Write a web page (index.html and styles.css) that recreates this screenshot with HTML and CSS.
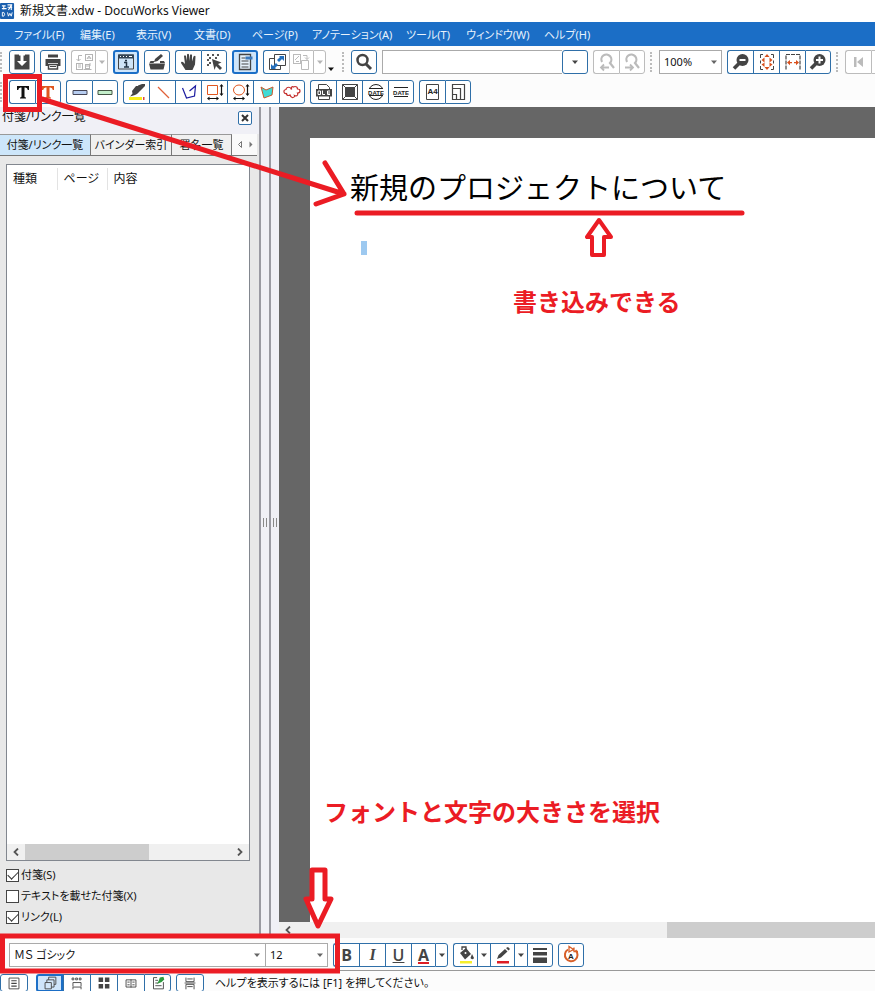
FILE: index.html
```html
<!DOCTYPE html>
<html lang="ja">
<head>
<meta charset="utf-8">
<title>新規文書.xdw - DocuWorks Viewer</title>
<link rel="stylesheet" href="styles.css">
</head>
<body>
<svg class="defs" aria-hidden="true">
  <symbol id="caret" viewBox="0 0 8 8"><path d="M1 2.500h6L4 6z" fill="currentColor"/></symbol>
  <symbol id="chev-left" viewBox="0 0 8 8"><path d="M6 .5 2.500 4 6 7.500" fill="none" stroke="currentColor" stroke-width="1.800"/></symbol>
  <symbol id="chev-right" viewBox="0 0 8 8"><path d="M2 .5 5.500 4 2 7.500" fill="none" stroke="currentColor" stroke-width="1.800"/></symbol>
</svg>

<header class="titlebar">
  <svg class="logo" viewBox="0 0 16 18"><rect width="15" height="17" x="0" y=".5" rx="1" fill="#1a5fae"/><path d="M2 3.500h4M4 3.500v4M2 6.500h5M8 2.500h5M8 5h5M9 8l3-5M12 3v5" stroke="#fff" stroke-width="1.200" fill="none"/><path d="M2.500 10.500v4h1.500q2-2 0-4zM8 10.500l1 4 1.500-3 1.500 3 1-4" stroke="#fff" fill="none"/></svg>
  <h1 class="window-title">新規文書.xdw - DocuWorks Viewer</h1>
</header>

<nav class="menubar">
  <a href="#">ファイル(F)</a><a href="#">編集(E)</a><a href="#">表示(V)</a><a href="#">文書(D)</a><a href="#">ページ(P)</a><a href="#">アノテーション(A)</a><a href="#">ツール(T)</a><a href="#">ウィンドウ(W)</a><a href="#">ヘルプ(H)</a>
</nav>

<div class="toolbars">
  <div class="toolbar">
    <span class="grip"></span>
    <div class="group"><button aria-label="保存"><svg viewBox="0 0 20 20"><path d="M2.500 2.500h15v15h-15z" fill="#444"/><path d="M8.500 2h3v7H15l-5 5-5-5h3.500z" fill="#fff"/><path d="M7 2h6v1.500H7z" fill="#fff"/></svg></button></div>
    <div class="group"><button aria-label="印刷"><svg viewBox="0 0 20 20"><path d="M5 2.500h10v3H5z" fill="#444"/><path d="M2.500 7h15v7H15v-3H5v3H2.500z" fill="#444"/><path d="M5.500 12.500h9v4.500h-9z" fill="#fff" stroke="#444" stroke-width="1.500"/><path d="M7 14h6v1H7z" fill="#444"/></svg></button></div>
    <div class="group off"><button class="mid" disabled aria-label="変換"><svg viewBox="0 0 20 20" fill="none" stroke="#b5b5b5"><rect x="11.500" y="2.500" width="7" height="6"/><path d="m13 7 2-3 2 3M13.500 6h3"/><rect x="2.500" y="11.500" width="6" height="6"/><path d="M4 13h3M4 15h3M8 3.500H4.500V9M2.500 7l2 2 2-2M11 14h5v-3M9.500 17.500h8"/><rect x="11.500" y="12.500" width="4" height="4"/></svg></button><button class="slim" disabled aria-label="変換メニュー"><svg class="arrow"><use href="#caret"/></svg></button></div>
    <div class="group"><button class="on" aria-label="情報"><svg viewBox="0 0 20 20"><path d="M2.500 3h15v14h-15z" fill="#cfe4f7" stroke="#444"/><path d="M2 2.500h16v4H2z" fill="#345"/><path d="M4 4.500h1M7 4.500h1M10 4.500h1M13 4.500h3" stroke="#fff"/><path d="M9 8.500h2M8 10.500h2.500v4.500M8 15h5" stroke="#234" stroke-width="1.500" fill="none"/></svg></button></div>
    <div class="group"><button aria-label="編集"><svg viewBox="0 0 20 20"><path d="M2 11.500h16l-1.500 6h-13zM3.500 9h4l-1 2H2.500zM13 9h4l1 2h-5z" fill="#444"/><path d="m7 10 1-3 6-5 2 2-5.500 5z" fill="#444"/></svg></button></div>
    <div class="group"><button aria-label="手のひら"><svg viewBox="0 0 20 20"><path d="M6.500 18 2 11q0-2 2-1l2 2-1-8q1-1.500 2 0l1 5V2.500q1-1.500 2 0V9l1-6q1-1.500 2 0v6.500l1.500-5q1.500-1.500 2 0l-.5 8-2.500 5.500z" fill="#444"/></svg></button><button aria-label="選択"><svg viewBox="0 0 20 20"><path d="m8 7 9.500 3.500-3.500 1.500 4 4-2 2-4-4-1.500 4z" fill="#444"/><path d="M3 2h2v2H3zM8 2h2v2H8zM13 2h2v2h-2zM3 7h2v2H3zM3 12h2v2H3zM5 5h2v2H5zM11 5h2v2h-2zM5 10h2v2H5z" fill="#555"/></svg></button></div>
    <div class="group"><button class="on" aria-label="ページ表示"><svg viewBox="0 0 20 20"><path d="M4.500 2.500h11v15h-11z" fill="#e6f2fc" stroke="#444" stroke-width="1.300"/><path d="M6.500 6h4M6.500 9h7M6.500 12h7M6.500 15h7" stroke="#444"/><path d="M10.500 4.500h7v3h-7z" fill="#3b79bd"/></svg></button></div>
    <div class="group"><button aria-label="連携"><svg viewBox="0 0 20 20" fill="none" stroke="#444"><path d="M7.500 2.500h11v11h-11zM7 6.500H2.500v11h11V14"/><path d="M12 4h5v5l-2-2-3 3-2-2 3-3zM9 17H4v-5l2 2 3-3 2 2-3 3z" fill="#2470bd" stroke="none"/></svg></button><button class="off mid" disabled aria-label="コピー"><svg viewBox="0 0 20 20" fill="none" stroke="#bbb"><rect x="1.500" y="2.500" width="7" height="9"/><path d="m3 8 4-4M4 9.500h3M11 3.500h4v4M13 5.500l2 2 2-2"/><path d="M9.500 8.500h7v9h-7z"/></svg></button><button class="off slim" disabled aria-label="コピーメニュー"><svg class="arrow"><use href="#caret"/></svg></button></div>
    <button class="overflow" aria-label="その他"><svg class="arrow"><use href="#caret"/></svg></button>
    <span class="grip"></span>
    <div class="group"><button aria-label="検索"><svg viewBox="0 0 20 20"><circle cx="8.500" cy="8" r="5" fill="none" stroke="#444" stroke-width="2.500"/><path d="m12 12 5 5" stroke="#444" stroke-width="3"/></svg></button></div>
    <div class="search"><input type="text" aria-label="検索文字列"><div class="group"><button aria-label="検索履歴"><svg class="arrow"><use href="#caret"/></svg></button></div></div>
    <div class="group off"><button disabled aria-label="前を検索"><svg viewBox="0 0 20 20" fill="none" stroke="#bbb"><path d="M5 10A5 5 0 1 1 13 11l4 5" stroke-width="2.200"/><path d="M12 15.500H4m3-3-3 3 3 3" stroke-width="1.800"/></svg></button><button disabled aria-label="次を検索"><svg viewBox="0 0 20 20" fill="none" stroke="#bbb"><path d="M5 10A5 5 0 1 1 13 11l4 5" stroke-width="2.200"/><path d="M3 15.500h8m-3-3 3 3-3 3" stroke-width="1.800"/></svg></button></div>
    <span class="grip"></span>
    <div class="combo zoom"><select aria-label="倍率"><option>100%</option></select><svg class="arrow"><use href="#caret"/></svg></div>
    <div class="group"><button aria-label="縮小"><svg viewBox="0 0 20 20"><circle cx="11.500" cy="8" r="6" fill="#444"/><path d="m8 11.500-5 5" stroke="#444" stroke-width="3.500"/><path d="M8.500 8h6" stroke="#fff" stroke-width="2"/></svg></button><button aria-label="全体表示"><svg viewBox="0 0 20 20"><path d="M6 2.500H3.500V6M14 2.500h2.500V6M6 17.500H3.500V14M14 17.500h2.500V14M3.500 8.500v3M16.500 8.500v3" fill="none" stroke="#444"/><path d="m10 2-2.500 3h5zM10 18l-2.500-3h5zM4.500 8l3-2.500v5zM15.500 8l-3-2.500v5zM4.500 12.500l3-2v4.500zM15.500 12.500l-3-2v4.500z" fill="#d8501c"/></svg></button><button aria-label="幅を合わせる"><svg viewBox="0 0 20 20"><path d="M3 17.500v-15h14v15" fill="none" stroke="#444" stroke-width="1.200" stroke-dasharray="4 1"/><path d="m4 10.500 3-2.500v2h2v1.200H7v2zM16 10.500l-3-2.500v2h-2v1.200h2v2z" fill="#d8501c"/></svg></button><button aria-label="拡大"><svg viewBox="0 0 20 20"><circle cx="11.500" cy="8" r="6" fill="#444"/><path d="m8 11.500-5 5" stroke="#444" stroke-width="3.500"/><path d="M8 8h7M11.500 4.500v7" stroke="#fff" stroke-width="2"/></svg></button></div>
    <span class="grip"></span>
    <div class="group off"><button disabled aria-label="先頭ページ"><svg viewBox="0 0 20 20"><path d="M5 5h2.500v10H5zM14 5v10l-6-5z" fill="#bbb"/></svg></button><button disabled aria-label="前ページ"><svg viewBox="0 0 20 20"><path d="M14 5v10l-6-5z" fill="#bbb"/></svg></button></div>
  </div>

  <div class="toolbar">
    <span class="grip"></span>
    <div class="group"><button aria-label="テキスト"><svg viewBox="0 0 20 20"><path d="M4 4h12v4h-1.200q-.3-2.500-2.500-2.500h-.8v9q0 1 1.500 1v1H7v-1q1.500 0 1.500-1v-9h-.8q-2.200 0-2.500 2.500H4z" fill="#111"/></svg></button><button aria-label="テキスト(赤)"><svg viewBox="0 0 20 20"><path d="M4 4h12v4h-1.200q-.3-2.500-2.500-2.500h-.8v9q0 1 1.500 1v1H7v-1q1.500 0 1.500-1v-9h-.8q-2.200 0-2.500 2.500H4z" fill="#e0561f"/></svg></button></div>
    <div class="group"><button aria-label="付箋(青)"><svg viewBox="0 0 20 20"><path d="M3 8.500h14v4H3z" fill="#b7cdf0" stroke="#445"/></svg></button><button aria-label="付箋(緑)"><svg viewBox="0 0 20 20"><path d="M3 8.500h14v4H3z" fill="#c4efcb" stroke="#454"/></svg></button></div>
    <div class="group"><button aria-label="マーカー"><svg viewBox="0 0 20 20"><path d="M2 15h13v3H2z" fill="#f8ee1c"/><path d="M16 15h1.500v3H16z" fill="#e3463a"/><path d="m5 9 4-5h9l-5 5-3 3-2 1-5 1.500 2.500-3zM11 3.500l4-1.500h3v2l-2 2h-5z" fill="#444"/></svg></button><button aria-label="直線"><svg viewBox="0 0 20 20"><path d="m5 5 11 11" stroke="#e06038" stroke-width="1.300"/></svg></button><button aria-label="折れ線"><svg viewBox="0 0 20 20"><path d="m3.500 6 4 10 8-2 1-10-6 5" fill="none" stroke="#1b1ba0" stroke-width="1.200"/></svg></button><button aria-label="矩形"><svg viewBox="0 0 20 20"><path d="M2.500 3.500h10v9h-10z" fill="none" stroke="#e0561f"/><path d="M3 16.500h10M16.500 3.500v9" stroke="#111" stroke-width="1.200"/><path d="m2 16.500 2.500-2v4zM14 16.500l-2.500-2v4zM16.500 2l-2 2.500h4zM16.500 14l-2-2.500h4z" fill="#111"/></svg></button><button aria-label="楕円"><svg viewBox="0 0 20 20"><ellipse cx="8" cy="8" rx="5.500" ry="5" fill="none" stroke="#e0561f"/><path d="M3 16.500h10M16.500 3.500v9" stroke="#111" stroke-width="1.200"/><path d="m2 16.500 2.500-2v4zM14 16.500l-2.500-2v4zM16.500 2l-2 2.500h4zM16.500 14l-2-2.500h4z" fill="#111"/></svg></button><button aria-label="多角形"><svg viewBox="0 0 20 20"><path d="m4 5 5 3 7-3-1 8-8 3z" fill="#3edbd6" stroke="#c85b2e"/></svg></button><button aria-label="雲形"><svg viewBox="0 0 20 20"><path d="M9.500 7.500q-1-3-4-2-1.500.5-1.500 2-2.500.5-2 2.500.5 2 2.500 1.500 0 2 2 2 1 0 1.500-.5 1 3 3 2.500 2-.5 1.500-2 2 1 3-.5.500-1 0-2 2.500 0 2.500-2t-2.500-2q0-2.500-2.500-2.500-1 0-1.500.5-1.500-1-2 .5z" fill="#fff" stroke="#c4302f" stroke-width="1.200"/></svg></button></div>
    <div class="group"><button aria-label="OLE"><svg viewBox="0 0 20 20"><path d="M4.500 7V2.500h8l3 3V7M4.500 14v3.500h11V14" fill="none" stroke="#444"/><path d="M2 7h16v7.500H2z" fill="#444"/><path d="M4 9h2.500v3.500H4zM8.500 8.500v4H11M16 9h-2.500v3.500H16M13.500 11H16" fill="none" stroke="#fff"/></svg></button><button aria-label="イメージ"><svg viewBox="0 0 20 20"><path d="M2.500 2.500h15v15h-15zM2.500 2.500l3 3M17.500 2.500l-3 3M2.500 17.500l3-3M17.500 17.500l-3-3" fill="none" stroke="#444"/><path d="M5 5h10v10H5z" fill="#444"/></svg></button><button class="stamp" aria-label="日付印"><svg viewBox="0 0 20 20"><circle cx="10" cy="10" r="7.500" fill="none" stroke="#222"/><path d="M1 6.500h18v7H1z" fill="#fff"/><path d="M3 6.500h14M3 13.500h14" stroke="#222"/><text x="10" y="12.500" text-anchor="middle">DATE</text></svg></button><button class="stamp" aria-label="日付"><svg viewBox="0 0 20 20"><path d="M3 5.500h14M3 14.500h14" stroke="#222"/><text x="10" y="12.500" text-anchor="middle">DATE</text></svg></button></div>
    <div class="group"><button class="stamp" aria-label="A4"><svg viewBox="0 0 20 20"><path d="M3.500 2.500h12v15h-12z" fill="none" stroke="#444"/><text class="a4" x="9.500" y="12" text-anchor="middle">A4</text></svg></button><button aria-label="用紙サイズ"><svg viewBox="0 0 20 20"><path d="M4.500 2.500h12v15h-12zM4.500 6.500h8v11M4.500 12.500h4v5" fill="none" stroke="#444" stroke-width="1.200"/></svg></button></div>
  </div>
</div>

<main class="workspace">
  <aside class="sidebar">
    <div class="panel-head"><h2>付箋/リンク一覧</h2><button class="close" aria-label="閉じる"><svg viewBox="0 0 12 12"><path d="m3 3 6 6M9 3 3 9" stroke="#333" stroke-width="2"/></svg></button></div>
    <div class="tabs"><button class="tab current">付箋/リンク一覧</button><button class="tab">バインダー索引</button><button class="tab">署名一覧</button><span class="tab-scroll"><svg viewBox="0 0 20 10"><path d="M6.500 1.500v6l-3-3z" fill="none" stroke="#777"/><path d="M14.500 1.500v6l3-3z" fill="#777"/></svg></span></div>
    <div class="list">
      <table><thead><tr><th>種類</th><th>ページ</th><th>内容</th></tr></thead></table>
      <div class="hscroll"><svg class="chev"><use href="#chev-left"/></svg><div class="track"><div class="thumb"></div></div><svg class="chev"><use href="#chev-right"/></svg></div>
    </div>
    <div class="filters">
      <label><input type="checkbox" checked>付箋(S)</label>
      <label><input type="checkbox">テキストを載せた付箋(X)</label>
      <label><input type="checkbox" checked>リンク(L)</label>
    </div>
  </aside>
  <div class="splitter"><i></i></div>
  <div class="splitter"><i></i></div>
  <section class="viewer">
    <div class="canvas">
      <article class="page">
        <h2 class="doc-title">新規のプロジェクトについて</h2>
        <div class="selection"></div>
      </article>
    </div>
    <div class="hscroll"><svg class="chev"><use href="#chev-left"/></svg><div class="track"><div class="thumb"></div></div></div>
  </section>
</main>

<div class="formatbar">
  <div class="combo font"><select aria-label="フォント"><option>ＭＳ ゴシック</option></select><svg class="arrow"><use href="#caret"/></svg></div>
  <div class="combo size"><select aria-label="サイズ"><option>12</option></select><svg class="arrow"><use href="#caret"/></svg></div>
  <div class="group">
    <button class="letter bold">B</button><button class="letter italic">I</button><button class="letter under">U</button><button class="letter color mid">A</button><button class="slim" aria-label="文字色"><svg class="arrow"><use href="#caret"/></svg></button>
  </div>
  <div class="group">
    <button class="mid" aria-label="塗りつぶし"><svg viewBox="0 0 20 20"><path d="M4 16h12v2.500H4z" fill="#f5ee2b"/><path d="m4 8 6-5 5 6-6 5.500z" fill="#444"/><path d="M6 5V2h4v3" fill="none" stroke="#444" stroke-width="1.300"/><path d="m16 9 2 4q-1.500 2.500-3.500 0z" fill="#444"/><circle cx="9.500" cy="8" r="1" fill="#fff"/></svg></button><button class="slim" aria-label="塗りつぶし色"><svg class="arrow"><use href="#caret"/></svg></button><button class="mid" aria-label="線の色"><svg viewBox="0 0 20 20"><path d="M4 16h12v2.500H4z" fill="#dd1c24"/><path d="m4 14 1.500-4L12 4l2.500 2.500-6.500 6zM13 3l2-1 2 2-1.500 1.500z" fill="#444"/></svg></button><button class="slim" aria-label="線の色メニュー"><svg class="arrow"><use href="#caret"/></svg></button><button aria-label="線の太さ"><svg viewBox="0 0 20 20"><path d="M3 3h14v2H3zM3 7h14v3.500H3zM3 12.500h14V18H3z" fill="#444"/></svg></button>
  </div>
  <div class="group"><button class="stamp" aria-label="回転"><svg viewBox="0 0 20 20"><path d="M7 4.500a6.300 6.300 0 1 0 7.500.8" fill="none" stroke="#d8602a" stroke-width="2"/><path d="M8 1.500v5.500l4.500-2.500zM13 2.500v4h4" fill="none" stroke="#d8602a" stroke-width="1.300"/><text class="a4" x="10" y="13.500" text-anchor="middle">A</text></svg></button></div>
</div>

<footer class="statusbar">
  <div class="group"><button aria-label="ページ"><svg viewBox="0 0 20 20"><path d="M4.500 4.500h11v12h-11z" fill="none" stroke="#444"/><path d="M7 7.500h6M7 10.500h6M7 13.500h6" stroke="#444" stroke-width="1.300"/></svg></button></div>
  <div class="group"><button class="on" aria-label="重ねて表示"><svg viewBox="0 0 20 20" fill="#d3e7fa" stroke="#444"><path d="M8.500 3.500h8v8h-8z"/><path d="M6.500 6.500h8v8h-8z"/><path d="M4.500 9.500h7v7h-7z"/></svg></button><button aria-label="連続表示"><svg viewBox="0 0 20 20" fill="none" stroke="#444"><path d="M4.500 4.500h2v2h-2zM8.500 4.500h2v2h-2zM12.500 4.500h2v2h-2zM5.500 14V9.500h9V14M5.500 17v-2.500h9V17"/></svg></button><button aria-label="一覧"><svg viewBox="0 0 20 20" fill="#444"><path d="M4 4h5v5H4zM11 4h5v5h-5zM4 11h5v5H4zM11 11h5v5h-5z"/></svg></button><button aria-label="見開き"><svg viewBox="0 0 20 20" fill="none" stroke="#444"><path d="M4.500 6.500h11v8h-11zM10 6v9M6 9h2.500M6 12h2.500M11.500 9H14M11.500 12H14"/></svg></button><button aria-label="状態"><svg viewBox="0 0 20 20" fill="none" stroke="#444"><path d="M9 4H5v12.500h11V9M7 7h3M7 10h3M7 13h7"/><path d="m9 11 2-4 1-3 4-1 1 3-3 3z" fill="#2e9a3e" stroke="none"/></svg></button></div>
  <div class="group"><button aria-label="縦並び"><svg viewBox="0 0 20 20" fill="none" stroke="#444"><path d="M5.500 4v4.500h9V4M5.500 17v-5.500h9V17M7 5.500h6M7 14h6M4 10h12"/></svg></button></div>
  <p class="hint">ヘルプを表示するには [F1] を押してください。</p>
</footer>

<div class="notes">
  <svg class="marks" width="875" height="991" viewBox="0 0 875 991" fill="none" stroke="#eb1c24" stroke-width="5" stroke-linecap="round" stroke-linejoin="round">
    <path d="M5.500 76.500h34v33h-34z" stroke-linejoin="miter"/>
    <path d="M2.500 936h335v35h-335z" stroke-linejoin="miter"/>
    <path d="M42 99 344 194M325 163l19 31-28 10"/>
    <path d="M357 213h385"/>
    <path d="M599 220l-12 17h5v18h12v-18h7z" stroke-width="4"/>
    <path d="M312 870h13v29h6l-13 27-12-27h6z" fill="#fff"/>
  </svg>
  <p class="note note-write">書き込みできる</p>
  <p class="note note-font">フォントと文字の大きさを選択</p>
</div>
</body>
</html>
```
FILE: styles.css
```css
* { box-sizing: border-box; }

body {
  position: relative;
  display: flex;
  flex-direction: column;
  min-height: 100vh;
  margin: 0;
  overflow: hidden;
  background: #fcfcfc;
  color: #111;
  font: 11px/16px "Noto Sans", "Noto Sans CJK JP", sans-serif;
  font-feature-settings: "palt";
}

h1, h2, p { margin: 0; font-weight: 400; }
button, input, select { font: inherit; font-feature-settings: inherit; color: inherit; }
svg { display: block; flex: none; }
.defs { position: absolute; width: 0; height: 0; }

.titlebar {
  display: flex;
  align-items: center;
  gap: 5px;
  height: 22px;
  background: #fff;
}
.logo { width: 15px; height: 18px; }
.window-title { font-size: 12px; line-height: 20px; }

.menubar {
  display: grid;
  grid-template-columns: 66px 56px 58px 58px 60px 94px 60px 78px auto;
  height: 24px;
  padding: 0 14px;
  background: #1b6ec6;
  line-height: 26px;
  white-space: nowrap;
}
.menubar a { color: #e8f2fc; text-decoration: none; }

.toolbars {
  display: flex;
  flex-direction: column;
  gap: 6px;
  padding: 4px 0 3px;
  overflow: hidden;
}
.toolbar { display: flex; gap: 5px; height: 24px; }
.grip {
  flex: none;
  width: 4px;
  margin: 2px 0;
  border-left: 2px dotted #bbb;
}

.group { display: flex; flex: none; }
.group button {
  display: flex;
  flex: none;
  align-items: center;
  justify-content: center;
  width: 26px;
  height: 24px;
  padding: 0;
  border: 1px solid #2f6fa8;
  border-right-width: 0;
  background: #fff;
  color: #444;
}
.group button:first-child { border-radius: 3px 0 0 3px; }
.group button:last-child { border-right-width: 1px; border-radius: 0 3px 3px 0; }
.group button:only-child { border-radius: 3px; }
.group button.mid { width: 24px; }
.group button.slim { width: 13px; }
.group.off button, .group button.off { border-color: #bcbcbc; color: #b5b5b5; }
.group button.on { border: 2px solid #1b6ec6; background: #cfe5fa; }
.group svg { width: 20px; height: 20px; }
svg.arrow, .group svg.arrow { width: 8px; height: 8px; }
.overflow {
  display: flex;
  flex: none;
  align-items: flex-end;
  width: 10px;
  margin-left: -4px;
  padding: 0 0 1px;
  border: 0;
  background: none;
}
.stamp text { font: bold 6px "Liberation Sans", sans-serif; fill: #222; }
.stamp text.a4 { font-size: 8px; }

.search { display: flex; flex: none; }
.search input {
  width: 180px;
  border: 1px solid #aaa;
  border-right: 0;
  background: #fff;
}
.combo { position: relative; flex: none; height: 24px; }
.combo select {
  width: 100%;
  height: 100%;
  padding: 0 4px;
  border: 1px solid #aaa;
  border-radius: 0;
  appearance: none;
  background: #fff;
}
.combo svg { position: absolute; right: 4px; top: 8px; color: #666; }
.zoom { width: 63px; }

.workspace { display: flex; flex: 1; min-height: 0; }
.sidebar {
  display: flex;
  flex: none;
  flex-direction: column;
  width: 259px;
  background: #e8e8e8;
}
.panel-head {
  display: flex;
  align-items: flex-start;
  justify-content: space-between;
  height: 27px;
  padding: 0 7px 0 2px;
  background: #f0f0f6;
}
.panel-head h2 { font-size: 12px; line-height: 20px; }
.close {
  width: 14px;
  height: 14px;
  margin-top: 4px;
  padding: 0;
  border: 1px solid #2f6fa8;
  border-radius: 2px;
  background: #fff;
}
.tabs {
  display: flex;
  height: 22px;
  margin-right: 2px;
  border-bottom: 1px solid #777;
  background: #fafafa;
}
.tab {
  flex: none;
  width: 81px;
  padding: 0;
  border: 0;
  border-top: 1px solid #999;
  border-right: 1px solid #777;
  background: #f0f0f0;
  white-space: nowrap;
}
.tab:first-child { width: 91px; }
.tab:nth-child(3) { width: 60px; }
.tab.current { background: #cde6fa; }
.tab-scroll { padding: 6px 3px; }
.tab-scroll svg { width: 20px; height: 10px; }

.list {
  display: flex;
  flex: 1;
  flex-direction: column;
  justify-content: space-between;
  margin: 8px 9px 0 6px;
  border: 1px solid #82878f;
  background: #fff;
}
.list table { align-self: flex-start; margin-top: 3px; border-collapse: collapse; font-size: 12px; }
.list th {
  width: 50px;
  height: 22px;
  padding: 0 6px;
  border-right: 1px solid #e3e3e3;
  font-weight: 400;
  text-align: left;
}
.list th:last-child { width: auto; border-right: 0; }
.hscroll {
  display: flex;
  align-items: center;
  height: 16px;
  background: #f0f0f0;
  color: #555;
}
.chev { width: 8px; height: 8px; margin: 0 5px; }
.track { flex: 1; height: 100%; }
.thumb { height: 100%; background: #cdcdcd; }
.list .thumb { width: 60%; }
.viewer .thumb { width: 36%; margin-left: auto; }

.filters {
  display: flex;
  flex-direction: column;
  gap: 5px;
  padding: 6px 6px 13px;
}
.filters label { display: flex; align-items: center; gap: 2px; }
.filters input {
  position: relative;
  width: 13px;
  height: 13px;
  margin: 0;
  border: 1px solid #444;
  appearance: none;
  background: #fff;
}
.filters input:checked::before {
  content: "";
  display: block;
  width: 9px;
  height: 5px;
  margin: 1px;
  border: solid #333;
  border-width: 0 0 1px 1px;
  transform: rotate(-45deg);
}

.splitter {
  display: flex;
  flex: none;
  align-items: center;
  justify-content: center;
  width: 10px;
  border-left: 2px solid #9a9aa2;
  background: #f0f0f6;
}
.splitter i {
  width: 4px;
  height: 9px;
  border: solid #888;
  border-width: 0 1px;
}

.viewer { display: flex; flex: 1; flex-direction: column; min-width: 0; }
.canvas {
  display: flex;
  flex: 1;
  padding: 31px 0 0 31px;
  background: #666;
}
.page { flex: 1; padding: 30px 40px; background: #fff; }
.doc-title {
  color: #000;
  font-size: 29px;
  line-height: 40px;
  font-feature-settings: normal;
  white-space: nowrap;
}
.selection {
  width: 6px;
  height: 14px;
  margin: 33px 11px;
  background: #9dc9f0;
}

.formatbar {
  display: flex;
  padding: 5px 9px 3px;
  border-bottom: 1px solid #999;
}
.font { width: 256px; }
.size { width: 63px; }
.font select { border-right: 0; }
.formatbar .group { margin-left: 5px; }
.group button.letter {
  color: #444;
  font: bold 16px/20px "Open Sans", sans-serif;
}
.group button.italic { font-family: "Liberation Serif", serif; font-style: italic; }
.group button.under { font-weight: 600; text-decoration: underline; }
.group button.color { text-decoration: underline 2px #dd1c24; }

.statusbar { display: flex; height: 20px; padding-top: 3px; overflow: hidden; }
.statusbar .group button { width: 27px; height: 18px; }
.statusbar .group button:only-child { width: 28px; }
.statusbar .group svg { width: 18px; height: 18px; }
.statusbar .group:nth-child(2) { margin: 0 5px 0 8px; }
.hint { padding-left: 11px; line-height: 18px; white-space: nowrap; }

.notes { position: absolute; inset: 0; pointer-events: none; }
.marks { position: absolute; left: 0; top: 0; }
.note {
  position: absolute;
  color: #eb1c24;
  font-size: 24px;
  font-weight: 700;
  line-height: 32px;
  font-feature-settings: normal;
  white-space: nowrap;
}
.note-write { left: 513px; top: 286px; }
.note-font { left: 324px; top: 796px; }
```
